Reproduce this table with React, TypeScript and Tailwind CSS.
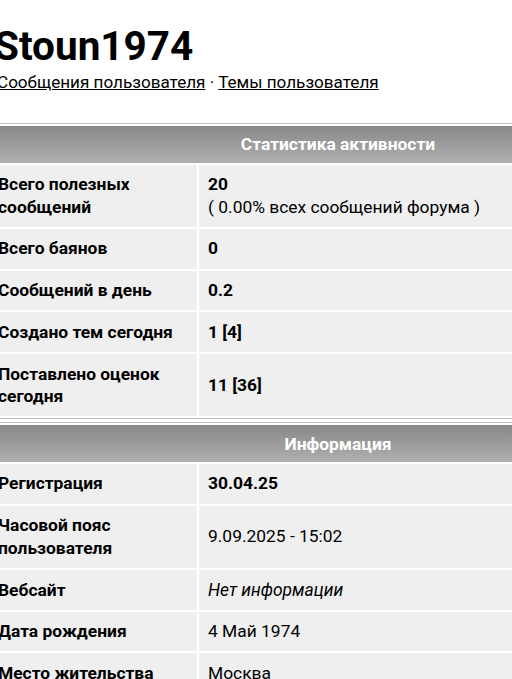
const stats = [
  { label: "Всего полезных сообщений", value: "20", note: "( 0.00% всех сообщений форума )" },
  { label: "Всего баянов", value: "0" },
  { label: "Сообщений в день", value: "0.2" },
  { label: "Создано тем сегодня", value: "1 [4]" },
  { label: "Поставлено оценок сегодня", value: "11 [36]" },
];

const info = [
  { label: "Регистрация", value: "30.04.25", kind: "bold" },
  { label: "Часовой пояс пользователя", value: "9.09.2025 - 15:02", kind: "normal" },
  { label: "Вебсайт", value: "Нет информации", kind: "italic" },
  { label: "Дата рождения", value: "4 Май 1974", kind: "normal" },
  { label: "Место жительства", value: "Москва", kind: "normal" },
];

const Header = ({ title }: { title: string }) => (
  <tr>
    <th
      colSpan={2}
      className="h-[36.5px] bg-gradient-to-b from-[#888888] to-[#b0b0b0] text-center text-[17.4px] font-bold text-white"
    >
      {title}
    </th>
  </tr>
);

export default function App() {
  return (
    <div className="w-full overflow-hidden bg-white font-['Roboto',sans-serif] text-black">
      <h1 className="-ml-[6px] pt-[22px] text-[40.5px] font-bold leading-[48px]">Stoun1974</h1>
      <div className="-ml-[3px] text-[17.1px] leading-[24px]">
        <a className="underline">Сообщения пользователя</a>
        <span> · </span>
        <a className="underline">Темы пользователя</a>
      </div>

      <div className="-ml-[12px] mt-[29px] w-[700px]">
        <table className="w-full border-separate border-spacing-[2px] border-t border-b border-[#c0c0c0]">
          <tbody>
            <Header title="Статистика активности" />
            {stats.map((row) => (
              <tr key={row.label}>
                <td className="w-[207px] bg-[#efefef] px-2 py-[8.5px] text-[17.4px] font-bold leading-[22.7px]">
                  {row.label}
                </td>
                <td className="bg-[#efefef] px-[9px] py-[8.5px] text-[17.4px] leading-[22.7px]">
                  <div className="font-bold">{row.value}</div>
                  {row.note && <div>{row.note}</div>}
                </td>
              </tr>
            ))}
          </tbody>
        </table>

        <table className="mt-[3px] w-full border-separate border-spacing-[2px] border-t border-[#c0c0c0]">
          <tbody>
            <Header title="Информация" />
            {info.map((row) => (
              <tr key={row.label}>
                <td className="w-[207px] bg-[#efefef] px-2 py-[8.5px] text-[17.4px] font-bold leading-[22.7px]">
                  {row.label}
                </td>
                <td
                  className={
                    "bg-[#efefef] px-[9px] py-[8.5px] text-[17.4px] leading-[22.7px] " +
                    (row.kind === "bold" ? "font-bold" : row.kind === "italic" ? "italic" : "")
                  }
                >
                  {row.value}
                </td>
              </tr>
            ))}
          </tbody>
        </table>
      </div>
    </div>
  );
}
